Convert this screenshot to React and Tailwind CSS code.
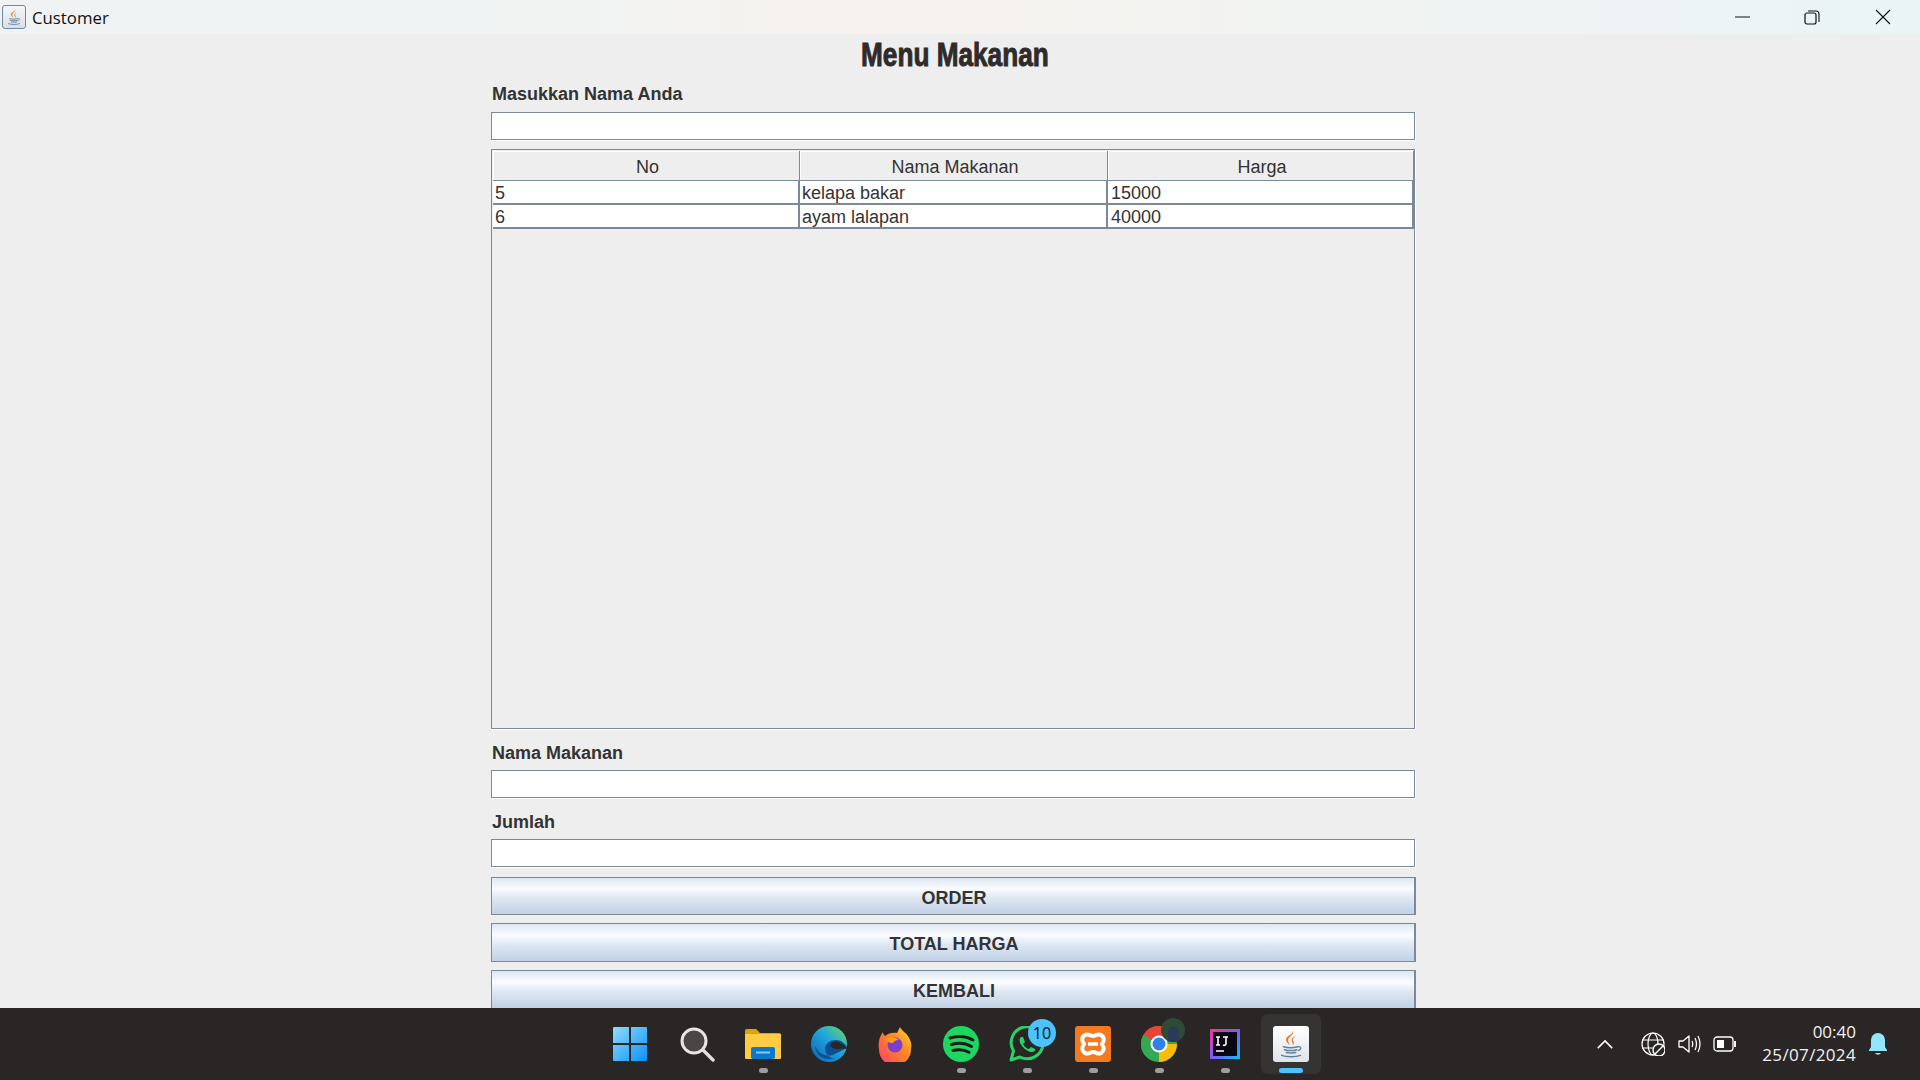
import React from "react";

const Sans = "font-['Liberation_Sans',Arial,sans-serif]";
const UI = "font-['Open_Sans','Noto_Sans',sans-serif]";

function JavaGlyph({ className }) {
  return (
    <svg viewBox="0 0 36 36" className={className}>
      <path d="M20 4c2 4-5 6-5 10 0 2 1 3 2 5-3-2-5-4-4-7 1-3 7-4 7-8z" fill="#e87a2a" />
      <path d="M23 9c-3 2-5 3-4 6 0 1 1 2 1 4 2-2 1-3 0-5 0-2 1-3 3-5z" fill="#e87a2a" />
      <path d="M10 21c4 1 11 1 15 0M11 24c4 1 10 1 13 0M13 27c3 .6 7 .6 10 0" stroke="#5f7f9f" strokeWidth="1.6" fill="none" strokeLinecap="round" />
      <path d="M25 21c4-1 5 3 0 4" stroke="#5f7f9f" strokeWidth="1.3" fill="none" />
      <path d="M8 30c5 2 15 2 20 0" stroke="#5f7f9f" strokeWidth="1.5" fill="none" strokeLinecap="round" />
    </svg>
  );
}

function Field() {
  return <div className="h-[28px] w-[924px] bg-white border border-[#7a8a99] shadow-[1px_1px_0_#ffffff]" />;
}

function Label({ children, className = "" }) {
  return (
    <div className={`flex items-center pl-[1px] text-[18px] font-bold text-[#333333] ${className}`}>{children}</div>
  );
}

function Btn({ children, className = "" }) {
  return (
    <div
      className={`w-[925px] flex items-center justify-center pt-[4px] pl-[2px] text-[18px] font-bold text-[#333333] border border-[#7a8a99] border-r-2 bg-[linear-gradient(to_bottom,#dce7f2_0%,#fbfcfe_30%,#dfe8f3_55%,#bfd1e5_100%)] shrink-0 ${className}`}
    >
      {children}
    </div>
  );
}

function Row({ a, b, c }) {
  const cell = "h-[22px] leading-[24px] bg-white text-[18px] text-[#333333] pl-[2px] border-r-2 border-[#7a8a99]";
  return (
    <div className="grid grid-cols-[307px_308px_306px] border-b-2 border-[#7a8a99]">
      <div className={cell}>{a}</div>
      <div className={cell}>{b}</div>
      <div className={cell + " pl-[3px]"}>{c}</div>
    </div>
  );
}

function Head({ children }) {
  return (
    <div className="h-[30px] flex items-center justify-center pt-[4px] pl-[3px] bg-[#eeeeee] text-[18px] text-[#333333] border-r border-b border-[#7a8a99] shadow-[inset_1px_1px_0_#ffffff]">
      {children}
    </div>
  );
}

function Slot({ children, dot, active, badge, first }) {
  const box = active
    ? "w-[60px] ml-[3px] bg-[#363333] rounded-[6px]"
    : first
      ? "w-[68px]"
      : "w-[66px]";
  return (
    <div className={`h-[60px] flex flex-col items-center justify-start pt-[12px] ${box}`}>
      <div className="w-[36px] h-[36px] relative flex items-center justify-center shrink-0">
        {children}
        {badge}
      </div>
      {dot ? (
        <span className={`block h-[5px] rounded-full mt-[6px] ${active ? "w-[24px] bg-[#4cc2ff]" : "w-[9px] bg-[#9d9d9d]"}`} />
      ) : null}
    </div>
  );
}

export default function App() {
  return (
    <div className={`w-[1920px] h-[1080px] flex flex-col overflow-hidden bg-[#eeeeee] ${Sans}`}>
      {/* title bar */}
      <div className="h-[34px] shrink-0 flex items-center bg-[linear-gradient(to_right,#f0f3f3_0%,#f1f3f3_30%,#f7f2ed_45%,#f3f3f1_60%,#eaf4f6_100%)]">
        <div className="ml-[2px] w-[24px] h-[24px] rounded-[3px] border border-[#6d89a8] bg-[linear-gradient(to_bottom,#f4f6f9,#d9dfe6)] flex items-center justify-center">
          <JavaGlyph className="w-[20px] h-[20px]" />
        </div>
        <span className={`ml-[6px] pt-[1px] text-[16.8px] text-[#111111] ${UI}`}>Customer</span>
        <div className="ml-auto flex items-center h-full">
          <svg viewBox="0 0 16 16" className="w-[16px] h-[16px] mr-[53px]"><path d="M0 8h15" stroke="#111" strokeWidth="1" /></svg>
          <svg viewBox="0 0 16 16" className="w-[16px] h-[16px] mr-[55px]">
            <rect x="1" y="4" width="11" height="11" rx="2" fill="none" stroke="#111" strokeWidth="1.2" />
            <path d="M4 2h8a3 3 0 0 1 3 3v8" fill="none" stroke="#111" strokeWidth="1.1" />
          </svg>
          <svg viewBox="0 0 16 16" className="w-[16px] h-[16px] mr-[29px]"><path d="M1 1l14 14M15 1L1 15" stroke="#111" strokeWidth="1.1" /></svg>
        </div>
      </div>

      {/* content */}
      <div className="flex-1 min-h-0 overflow-hidden pl-[491px]">
        <div className="w-[925px] flex flex-col">
          <div className="h-[42px] flex items-center justify-center pl-[3px] pb-[2px]">
            <span className="scale-x-[0.77] font-bold whitespace-nowrap text-[34px] text-[#2f2b2b] [-webkit-text-stroke:1px_#2f2b2b] leading-none">Menu Makanan</span>
          </div>
          <Label className="h-[36px]">Masukkan Nama Anda</Label>
          <Field />
          <div className="mt-[9px] w-[924px] h-[580px] shrink-0 border border-[#7a8a99] pt-[1px] pl-[1px] shadow-[1px_1px_0_#ffffff] bg-[#eeeeee]">
            <div className="grid grid-cols-[307px_308px_306px]">
              <Head>No</Head>
              <Head>Nama Makanan</Head>
              <Head>Harga</Head>
            </div>
            <Row a="5" b="kelapa bakar" c="15000" />
            <Row a="6" b="ayam lalapan" c="40000" />
          </div>
          <Label className="h-[41px] pt-[7px]">Nama Makanan</Label>
          <Field />
          <Label className="h-[41px] pt-[7px]">Jumlah</Label>
          <Field />
          <Btn className="mt-[10px] h-[38px]">ORDER</Btn>
          <Btn className="mt-[8px] h-[39px]">TOTAL HARGA</Btn>
          <Btn className="mt-[8px] h-[39px]">KEMBALI</Btn>
        </div>
      </div>

      {/* taskbar */}
      <div className={`h-[72px] shrink-0 bg-[#2a2626] flex items-start pt-[6px] pl-[596px] ${UI}`}>
        <Slot first>
          <svg viewBox="0 0 36 36" className="w-[36px] h-[36px]">
            <defs>
              <linearGradient id="win" x1="0" y1="0" x2="1" y2="1"><stop offset="0" stopColor="#8fdcff" /><stop offset="1" stopColor="#0a92f5" /></linearGradient>
            </defs>
            <path d="M1 2a1 1 0 0 1 1-1h15v16H1zM19 1h15a1 1 0 0 1 1 1v15H19zM1 19h16v16H2a1 1 0 0 1-1-1zM19 19h16v15a1 1 0 0 1-1 1H19z" fill="url(#win)" />
          </svg>
        </Slot>
        <Slot>
          <svg viewBox="0 0 36 36" className="w-[36px] h-[36px]">
            <circle cx="15" cy="15" r="12" fill="#4a4646" stroke="#e6e6e6" strokeWidth="3" />
            <path d="M24 24l10 10" stroke="#e0e0e0" strokeWidth="3.4" strokeLinecap="round" />
          </svg>
        </Slot>
        <Slot dot>
          <svg viewBox="0 0 36 36" className="w-[36px] h-[36px]">
            <path d="M0 5a2 2 0 0 1 2-2h9l4 4h19a2 2 0 0 1 2 2v4H0z" fill="#e2a205" />
            <path d="M0 8h36v24a1 1 0 0 1-1 1H1a1 1 0 0 1-1-1z" fill="#fecb42" />
            <rect x="6" y="21" width="24" height="12" rx="2" fill="#0b78d0" />
            <rect x="11" y="25.5" width="14" height="2" fill="#8cc8f2" />
          </svg>
        </Slot>
        <Slot>
          <svg viewBox="0 0 36 36" className="w-[36px] h-[36px]">
            <defs>
              <linearGradient id="edge" x1="0" y1="1" x2="1" y2="0"><stop offset="0" stopColor="#0b5fae" /><stop offset="0.55" stopColor="#1fa6dc" /><stop offset="1" stopColor="#6fdc5a" /></linearGradient>
            </defs>
            <circle cx="18" cy="18" r="18" fill="url(#edge)" />
            <path d="M36 22c0-3-5-8-11-8-6 0-10 3-11 8 0 6 5 11 11 11h-7C9 33 4 26 4 19 6 28 16 32 24 28z" fill="#0c4f95" />
            <path d="M27 23c-5 0-9-2-7-6 1-2 6-2 9 0 4 2 7 4 7 6-3-1-6 0-9 0z" fill="#2a2626" />
          </svg>
        </Slot>
        <Slot>
          <svg viewBox="0 0 36 36" className="w-[36px] h-[36px]">
            <defs>
              <linearGradient id="ff" x1="0" y1="1" x2="1" y2="0"><stop offset="0" stopColor="#ff3c6e" /><stop offset="0.6" stopColor="#ff8a1f" /><stop offset="1" stopColor="#ffd83a" /></linearGradient>
            </defs>
            <path d="M23 1c1 3 5 5 8 9 3 5 4 8 3 13a16 16 0 0 1-32 1C1 17 2 11 6 6c0 2 1 3 2 4 3-3 8-4 12-3 1-2 2-4 3-6z" fill="url(#ff)" />
            <circle cx="18" cy="19" r="7.5" fill="#7a3fd0" />
            <path d="M8 13c5-3 11-2 14 1-3 0-5 1-6 3-3 0-6-1-8-4z" fill="#ff9a1f" />
          </svg>
        </Slot>
        <Slot dot>
          <svg viewBox="0 0 36 36" className="w-[36px] h-[36px]">
            <circle cx="18" cy="18" r="18" fill="#1ed760" />
            <path d="M7 12c8-2.500 16-2 23 2M8.500 18.500c7-2 14-1.500 20 2M10 24.500c6-1.500 11-1 16 1.800" stroke="#1a1a1a" strokeWidth="3" fill="none" strokeLinecap="round" />
          </svg>
        </Slot>
        <Slot
          dot
          badge={
            <span className="absolute top-[-7px] right-[-11px] w-[28px] h-[28px] rounded-full bg-[#4cc2ff] text-[#111111] text-[16px] leading-[28px] text-center">10</span>
          }
        >
          <svg viewBox="0 0 36 36" className="w-[36px] h-[36px]">
            <path d="M2 34l2.500-9A16 16 0 1 1 11 31z" fill="none" stroke="#25d366" strokeWidth="3" strokeLinejoin="round" />
            <path d="M12 11c-2 2-2 5 1 9s7 6 10 6c2 0 4-2 3-3l-4-2-2 2c-2 0-5-3-6-5l2-2-2-5z" fill="#25d366" />
          </svg>
        </Slot>
        <Slot dot>
          <div className="w-[36px] h-[36px] rounded-[3px] bg-[#f37a20] flex items-center justify-center">
            <svg viewBox="0 0 36 36" className="w-[36px] h-[36px]">
              <path d="M10 9c3-2 5 1 8 1s5-3 8-1 4 5 1 9c3 4 2 7-1 9s-5-1-8-1-5 3-8 1-4-5-1-9c-3-4-2-7 1-9z" fill="none" stroke="#ffffff" strokeWidth="4" />
              <path d="M13 18h10" stroke="#ffffff" strokeWidth="3.5" />
            </svg>
          </div>
        </Slot>
        <Slot
          dot
          badge={
            <span className="absolute top-[-8px] right-[-8px] w-[24px] h-[24px] rounded-full bg-[#2f4a35] overflow-hidden flex items-end justify-center">
              <span className="block w-[11px] h-[15px] rounded-t-[5px] bg-[#2b3a55]" />
            </span>
          }
        >
          <svg viewBox="0 0 36 36" className="w-[36px] h-[36px]">
            <circle cx="18" cy="18" r="18" fill="#34a853" />
            <path d="M18 18L33.600 9A18 18 0 0 0 2.400 9z" fill="#ea4335" />
            <path d="M18 18h18A18 18 0 0 1 18 36z" fill="#fbbc05" />
            <path d="M18 18l-15.600-9A18 18 0 0 0 12 35z" fill="#34a853" />
            <circle cx="18" cy="18" r="8.500" fill="#ffffff" />
            <circle cx="18" cy="18" r="6.500" fill="#2f7fee" />
          </svg>
        </Slot>
        <Slot dot>
          <svg viewBox="0 0 30 30" className="w-[30px] h-[30px]">
            <defs>
              <linearGradient id="ij" x1="0" y1="0" x2="1" y2="1"><stop offset="0" stopColor="#ff318c" /><stop offset="0.5" stopColor="#7b5bf5" /><stop offset="1" stopColor="#07c3f2" /></linearGradient>
            </defs>
            <rect width="30" height="30" fill="url(#ij)" />
            <rect x="3" y="3" width="24" height="24" fill="#0a0612" />
            <path d="M6 8h4M8 8v8M6 16h4M13 8h5M16 8v7a2 2 0 0 1-3 1M6 22h8" stroke="#ffffff" strokeWidth="1.600" fill="none" />
          </svg>
        </Slot>
        <Slot dot active>
          <div className="w-[36px] h-[36px] rounded-[3px] bg-[linear-gradient(to_bottom,#ffffff,#dfe4ea)] flex items-center justify-center">
            <JavaGlyph className="w-[34px] h-[34px]" />
          </div>
        </Slot>

        {/* tray */}
        <div className="ml-auto h-full flex items-center pb-[6px] pr-[32px] text-white">
          <svg viewBox="0 0 20 12" className="w-[18px] h-[11px] mr-[27px]"><path d="M2 10l8-8 8 8" stroke="#fff" strokeWidth="1.800" fill="none" /></svg>
          <svg viewBox="0 0 24 24" className="w-[24px] h-[24px] mr-[12px]" fill="none" stroke="#fff" strokeWidth="1.200">
            <circle cx="12" cy="12" r="11" />
            <ellipse cx="12" cy="12" rx="5" ry="11" />
            <path d="M1 8h22M1 16h22" />
            <circle cx="18" cy="18" r="6" fill="#2a2626" strokeWidth="1.400" />
            <path d="M14 22l8-8" strokeWidth="1.400" />
          </svg>
          <svg viewBox="0 0 24 24" className="w-[24px] h-[24px] mr-[12px]" fill="none" stroke="#fff" strokeWidth="1.300">
            <path d="M2 9v6h4l6 5V4L6 9z" strokeLinejoin="round" />
            <path d="M15 9c1 2 1 4 0 6M18 6c2 4 2 8 0 12M21 4c2.500 5 2.500 11 0 16" />
          </svg>
          <svg viewBox="0 0 24 16" className="w-[24px] h-[16px] mr-[19px]" fill="none">
            <rect x="1" y="1" width="19" height="14" rx="3" stroke="#fff" strokeWidth="1.300" />
            <rect x="4" y="4" width="7" height="8" fill="#fff" />
            <path d="M21 5h2v6h-2z" fill="#fff" />
          </svg>
          <div className="flex flex-col items-end text-[17px] leading-[23px] mb-[2px] mr-[12px] w-[100px] text-[#f2f2f2]">
            <span>00:40</span>
            <span className="whitespace-nowrap tracking-[0.35px]">25/07/2024</span>
          </div>
          <svg viewBox="0 0 20 24" className="w-[20px] h-[24px]">
            <path d="M10 1a7 7 0 0 0-7 7v7l-2 3v1h18v-1l-2-3V8a7 7 0 0 0-7-7z" fill="#93e6ff" />
            <path d="M7 21a3.500 3.500 0 0 0 6 0z" fill="#93e6ff" />
          </svg>
        </div>
      </div>
    </div>
  );
}
